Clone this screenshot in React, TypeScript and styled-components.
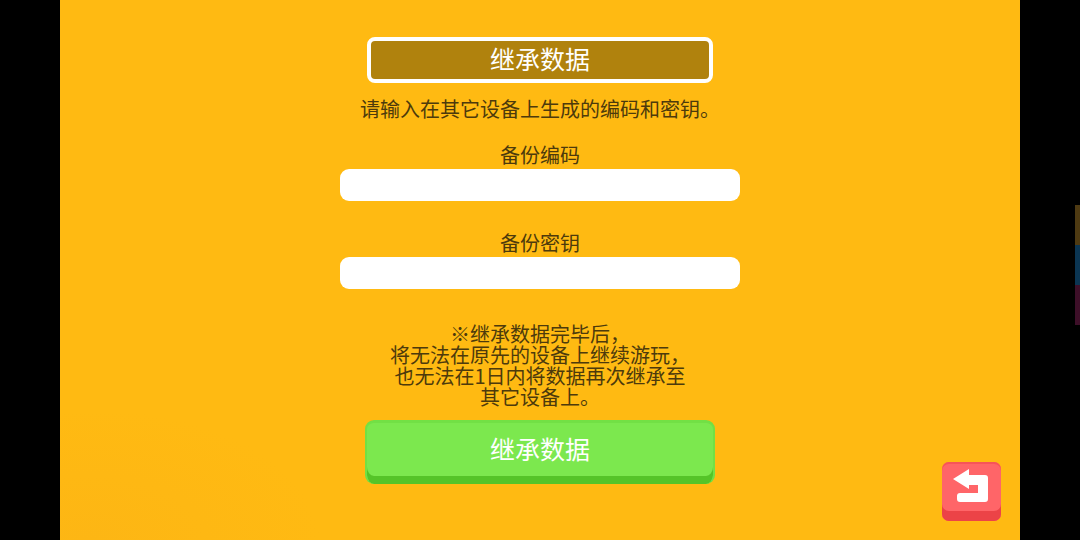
import React from 'react'
import styled, { createGlobalStyle } from 'styled-components'

const GlobalStyle = createGlobalStyle`
  html,
  body {
    margin: 0;
    padding: 0;
    background: #000;
  }
`

const Screen = styled.div`
  position: relative;
  width: 1080px;
  height: 540px;
  overflow: hidden;
  background: #000;
  display: flex;
  justify-content: center;
  font-family: 'Noto Sans CJK SC', 'Noto Sans', sans-serif;
`

const Stage = styled.main`
  position: relative;
  width: 960px;
  height: 540px;
  box-sizing: border-box;
  padding-top: 37px;
  background: radial-gradient(ellipse 230px 130px at 30px 540px, #fdb614, #ffba12);
  display: flex;
  flex-direction: column;
  align-items: center;
  color: #4d3a0c;
`

const Title = styled.h1`
  width: 346px;
  height: 46px;
  box-sizing: border-box;
  margin: 0;
  border: 4px solid #fff;
  border-radius: 8px;
  background: #b0820d;
  color: #fff;
  font-size: 25px;
  font-weight: 400;
  line-height: 34px;
  text-align: center;
`

const Hint = styled.p`
  margin: 12px 0 0;
  font-size: 20px;
  line-height: 28px;
`

const Field = styled.label`
  display: flex;
  flex-direction: column;
  align-items: center;
  margin-top: ${(p: { $top: number }) => p.$top}px;
`

const FieldLabel = styled.span`
  font-size: 20px;
  line-height: 28px;
`

const TextInput = styled.input`
  display: block;
  width: 400px;
  height: 32px;
  box-sizing: border-box;
  margin: 0;
  border: 0;
  border-radius: 9px;
  background: #fff;
`

const Notice = styled.p`
  margin: 34px 0 0;
  font-size: 20px;
  line-height: 21px;
  text-align: center;
`

const SubmitButton = styled.button`
  width: 350px;
  height: 64px;
  box-sizing: border-box;
  margin-top: 13px;
  padding: 0 0 12px;
  border: 2px solid #72e045;
  border-top-width: 3px;
  border-bottom: 0;
  border-radius: 9px;
  background: #7ce84e;
  box-shadow: inset 0 -8px 0 #55c428;
  color: #fff;
  font-family: inherit;
  font-size: 25px;
  line-height: 32px;
`

const BackButton = styled.button`
  position: absolute;
  left: 882px;
  top: 462px;
  width: 59px;
  height: 59px;
  padding: 0;
  border: 0;
  border-radius: 7px;
  background: #ff6568;
  box-shadow: inset 0 -10px 0 #ec4347, inset 0 2px 0 #f75458;
  display: flex;
`

const EdgeStrip = styled.div`
  position: absolute;
  right: 0;
  top: 205px;
  width: 5px;
  display: flex;
  flex-direction: column;
`

const StripPiece = styled.span<{ $color: string }>`
  display: block;
  height: 40px;
  background: ${(p) => p.$color};
`

const App: React.FC = () => {
  return (
    <Screen>
      <GlobalStyle />
      <Stage>
        <Title>继承数据</Title>
        <Hint>请输入在其它设备上生成的编码和密钥。</Hint>
        <Field $top={18}>
          <FieldLabel>备份编码</FieldLabel>
          <TextInput type="text" />
        </Field>
        <Field $top={28}>
          <FieldLabel>备份密钥</FieldLabel>
          <TextInput type="text" />
        </Field>
        <Notice>
          ※继承数据完毕后，
          <br />
          将无法在原先的设备上继续游玩，
          <br />
          也无法在1日内将数据再次继承至
          <br />
          其它设备上。
        </Notice>
        <SubmitButton type="button">继承数据</SubmitButton>
        <BackButton type="button" aria-label="返回">
          <svg width="59" height="59" viewBox="0 0 59 59" fill="#fff">
            <path d="M11 17 27 7V13H43a3 3 0 0 1 3 3V37a3 3 0 0 1-3 3H18a3 3 0 0 1-3-3V34a3 3 0 0 1 3-3H36V23H27V27Z" />
          </svg>
        </BackButton>
      </Stage>
      <EdgeStrip>
        <StripPiece $color="#4e3a12" />
        <StripPiece $color="#0b3552" />
        <StripPiece $color="#3d0f28" />
      </EdgeStrip>
    </Screen>
  )
}

export default App
